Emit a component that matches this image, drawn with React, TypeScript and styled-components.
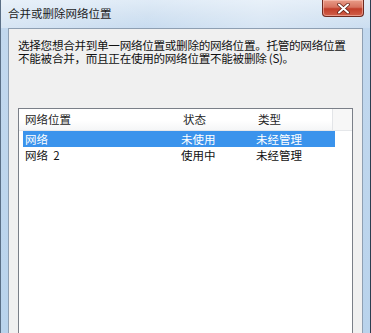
import styled, { createGlobalStyle } from 'styled-components';

const GlobalStyle = createGlobalStyle`
  html, body {
    margin: 0;
    padding: 0;
    background: #ffffff;
  }
  body {
    font-family: "Noto Sans CJK SC", "Liberation Sans", sans-serif;
  }
`;

const Window = styled.div`
  width: 371px;
  height: 333px;
  display: flex;
  flex-direction: column;
  box-sizing: border-box;
  overflow: hidden;
  border-left: 1px solid #5a6f86;
  border-right: 1px solid #2c3d50;
  background: linear-gradient(
    180deg,
    #dce9f6 0px,
    #cfe0f1 14px,
    #c2d8ee 28px,
    #b9d3ec 100%
  );
`;

const TitleBar = styled.div`
  height: 28px;
  display: flex;
  align-items: flex-start;
  padding-left: 7px;
  background: linear-gradient(
    100deg,
    rgba(255, 255, 255, 0.35) 0%,
    rgba(255, 255, 255, 0.1) 40%,
    rgba(255, 255, 255, 0.35) 70%,
    rgba(255, 255, 255, 0.15) 100%
  );
`;

const Title = styled.div`
  padding-top: 5px;
  font-size: 11.5px;
  line-height: 16px;
  color: #1b1b1b;
`;

const CloseButton = styled.div`
  margin-left: auto;
  margin-right: 6px;
  width: 42px;
  height: 17px;
  box-sizing: border-box;
  border: 1px solid #6e2a20;
  border-top: none;
  border-radius: 0 0 4px 4px;
  background: linear-gradient(180deg, #e99c88 0%, #d77360 45%, #c23e2a 55%, #d0604a 100%);
  box-shadow: inset 0 0 0 1px rgba(255, 210, 200, 0.5);
  display: flex;
  align-items: center;
  justify-content: center;
`;

const Client = styled.div`
  flex: 1;
  margin: 0 7px;
  display: flex;
  flex-direction: column;
  box-sizing: border-box;
  border: 1px solid #8e9fb2;
  border-bottom: none;
  background: #f0f0f0;
  padding: 10px 9px 0 9px;
`;

const Description = styled.p`
  margin: 0;
  font-size: 11.6px;
  line-height: 13px;
  letter-spacing: -0.3px;
  white-space: nowrap;
  color: #111111;
`;

const ListBox = styled.div`
  flex: 1;
  margin-top: 43px;
  border: 1px solid #7a7f88;
  border-bottom: none;
  background: #ffffff;
  display: flex;
  flex-direction: column;
`;

const HeaderRow = styled.div`
  height: 21px;
  display: flex;
  background: linear-gradient(180deg, #ffffff 0%, #ffffff 55%, #f5f6f7 100%);
  border-bottom: 1px solid #e5e7ea;
`;

const HeaderCell = styled.div<{ $width: number; $last?: boolean }>`
  width: ${(p) => p.$width}px;
  box-sizing: border-box;
  padding-left: 6px;
  font-size: 11.5px;
  line-height: 21px;
  color: #1e1e1e;
  border-right: 1px solid ${(p) => (p.$last ? '#e3e5e8' : 'transparent')};
  white-space: nowrap;
`;

const HeaderFiller = styled.div`
  flex: 1;
  background: #f7f7f7;
`;

const Rows = styled.div`
  padding: 0 0 0 4px;
  display: flex;
  flex-direction: column;
`;

const Row = styled.div<{ $selected?: boolean }>`
  width: 312px;
  height: 16px;
  display: flex;
  background: ${(p) => (p.$selected ? '#3a93ec' : 'transparent')};
  color: ${(p) => (p.$selected ? '#ffffff' : '#111111')};
`;

const Cell = styled.div<{ $width: number }>`
  width: ${(p) => p.$width}px;
  box-sizing: border-box;
  padding-left: 2px;
  font-size: 11.5px;
  line-height: 16px;
  white-space: pre;
`;

const columns = [
  { title: '网络位置', width: 158 },
  { title: '状态', width: 75 },
  { title: '类型', width: 81 },
];

const rows = [
  { name: '网络', state: '未使用', kind: '未经管理', selected: true },
  { name: '网络  2', state: '使用中', kind: '未经管理', selected: false },
];

const App = () => {
  return (
    <>
      <GlobalStyle />
      <Window>
        <TitleBar>
          <Title>合并或删除网络位置</Title>
          <CloseButton>
            <svg width="13" height="11" viewBox="0 0 13 11">
              <path
                d="M2 1.5 L11 9.5 M11 1.5 L2 9.5"
                stroke="#5a1a10"
                strokeWidth="3.4"
                strokeLinecap="round"
              />
              <path
                d="M2 1.5 L11 9.5 M11 1.5 L2 9.5"
                stroke="#ffffff"
                strokeWidth="2"
                strokeLinecap="round"
              />
            </svg>
          </CloseButton>
        </TitleBar>
        <Client>
          <Description>
            选择您想合并到单一网络位置或删除的网络位置。托管的网络位置
            <br />
            不能被合并，而且正在使用的网络位置不能被删除 (S)。
          </Description>
          <ListBox>
            <HeaderRow>
              {columns.map((c, i) => (
                <HeaderCell key={c.title} $width={c.width} $last={i === columns.length - 1}>
                  {c.title}
                </HeaderCell>
              ))}
              <HeaderFiller />
            </HeaderRow>
            <Rows>
              {rows.map((r) => (
                <Row key={r.name} $selected={r.selected}>
                  <Cell $width={156}>{r.name}</Cell>
                  <Cell $width={75}>{r.state}</Cell>
                  <Cell $width={81}>{r.kind}</Cell>
                </Row>
              ))}
            </Rows>
          </ListBox>
        </Client>
      </Window>
    </>
  );
};

export default App;
